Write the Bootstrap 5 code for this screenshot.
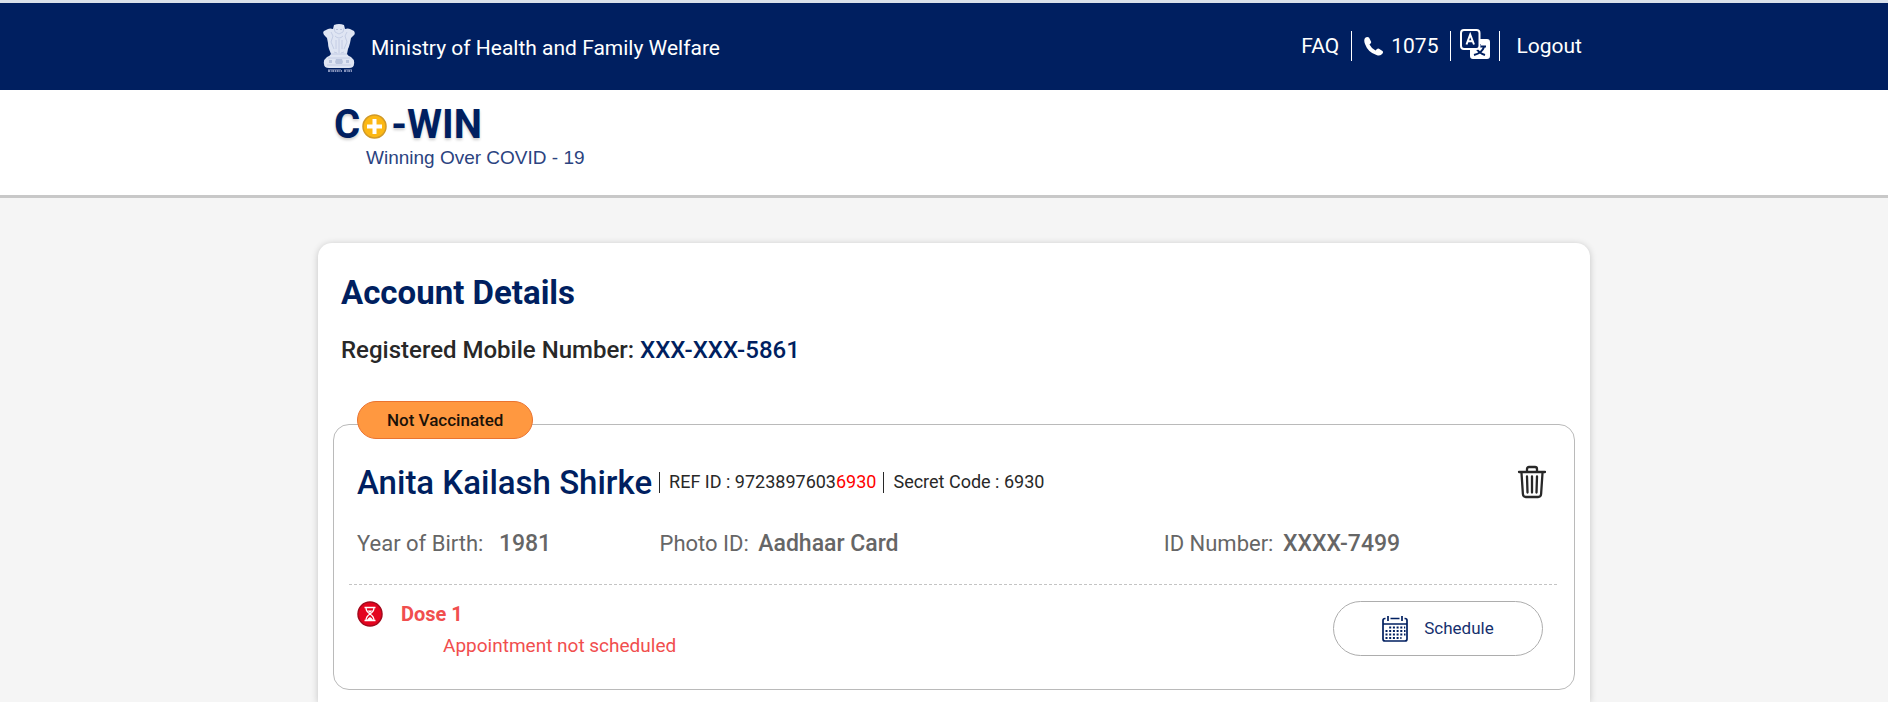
<!DOCTYPE html>
<html lang="en">
<head>
<meta charset="utf-8">
<meta name="viewport" content="width=device-width, initial-scale=1">
<title>Account Details - Co-WIN</title>
<link href="https://cdn.jsdelivr.net/npm/bootstrap@5.3.0/dist/css/bootstrap.min.css" rel="stylesheet">
<style>
  :root { --navy: #001f60; --line: #bababa; --coral: #f14e4e; }
  body { font-family: Roboto, "Liberation Sans", sans-serif; background: #f5f5f5; color: #282828; }
  .shell { padding-left: 20px; }
  .page-col { max-width: 1272px; margin: 0 auto; }
  .topbar { background: var(--navy); border-top: 3px solid #d9e0ea; color: #fff; font-size: 21px; }
  .topbar-row { min-height: 87px; padding: 4px 8px 0 5px; }
  .topbar a { color: #fff; text-decoration: none; line-height: 30px; }
  .util-links { margin-bottom: 5px; }
  .vline { width: 1px; background: currentColor; }
  .util-links .vline { height: 30px; margin: 0 12px; }
  .lang-btn { color: #fff; line-height: 0; }
  .lang-btn svg { margin-bottom: 3px; }
  .brandbar { background: #fff; border-bottom: 3px solid #c8c8c8; }
  .brandbar-row { min-height: 105px; padding: 16px 16px 0; }
  .wordmark { color: var(--navy); font-size: 40px; line-height: 38px; font-weight: 700; text-shadow: 0 2px 3px #0003; }
  .wordmark svg { margin: 2px 4px 0 2px; }
  .tagline { color: #2b4380; font: 19px/28px "Liberation Sans", Arial, sans-serif; padding-left: 32px; }
  .account { background: #fff; border-radius: 14px 14px 0 0; box-shadow: 0 1px 7px #0003; margin-top: 45px; padding: 30px 15px 12px; }
  .account h1 { color: var(--navy); font-size: 33px; line-height: 40px; font-weight: 700; margin: 0 8px 22px; }
  .mobile-line { font-size: 24px; line-height: 30px; font-weight: 500; margin: 0 8px 59px; }
  .navy { color: var(--navy); }
  .member { border: 1px solid var(--line); border-radius: 16px; padding: 36px 15px 28px; }
  .status-pill { position: absolute; top: -24px; left: 23px; background: #ff9840; border: 1px solid #ea7330; color: #1c1208; font-size: 17px; line-height: 36px; font-weight: 500; padding: 0 29px; border-radius: 19px; }
  .member-head { padding: 0 12px 0 8px; margin-bottom: 26px; font-size: 18px; line-height: 22px; }
  .member-head h2 { color: var(--navy); font-size: 33px; line-height: 40px; font-weight: 500; margin: 0; padding-top: 2px; }
  .member-head .vline { height: 21px; margin: 0 9px 0 7px; }
  .alert-digits { color: #f00; }
  .facts { --bs-gutter-x: 16px; margin: 0 0 25px; font-size: 22px; line-height: 30px; color: #666; }
  .facts b { font-size: 23px; line-height: 26px; font-weight: 500; margin-left: 4px; }
  .facts .wide { margin-left: 10px; }
  .dash { height: 1px; background: repeating-linear-gradient(90deg, #c4c4c4 0 3px, transparent 3px 5px); }
  .dose { padding: 16px 16px 0 8px; color: var(--coral); }
  .dose-text { margin-left: 18px; }
  .dose h3 { font-size: 20px; line-height: 26px; font-weight: 700; margin: 0 0 4px; }
  .dose p { font-size: 19px; line-height: 30px; margin: 0 0 0 42px; }
  .schedule { width: 210px; height: 55px; border: 1px solid #adadad; border-radius: 28px; color: #16306e; font-size: 17px; }
</style>
</head>
<body class="d-flex flex-column min-vh-100">
<header>
  <div class="topbar">
    <div class="shell">
      <div class="page-col topbar-row d-flex flex-wrap align-items-center justify-content-between">
        <div class="d-flex align-items-center">
          <svg width="32" height="50" viewBox="0 0 32 50" class="flex-shrink-0" aria-hidden="true">
            <path fill="#dfe5f3" d="M11 1q5-2 10 0l1 4q3-1 5 0l4 2q2 3-1 5l-2 2-1 5q-1 4-2 6l-1 5q1 2 4 3 4 3 3 7 0 4-5 4H6q-5 0-5-4-1-4 3-7 3-1 4-3l-2-5q-1-3-1-6l-1-5-2-2Q-1 9 1 7l4-2q2-1 5 0z"/>
            <path fill="none" stroke="#bcc7e0" stroke-width=".8" d="M11 4l1 4 4 2 4-2 1-4M8 8l2 4-2 6 3 7M24 8l-2 4 2 6-3 7M12 12q4 4 8 0M13 16v9M16 15v14M19 16v9M8 30h16M5 34h22M4 41h24M11 28l3 1M21 28l-3 1"/>
            <path fill="#b8c3dc" d="M13 35h6l1 3-1 2h-6l-1-2zM6 36h3v3H6zM23 36h3v3h-3zM13 5h2v1h-2zM17 5h2v1h-2z"/>
            <path stroke="#8492bb" stroke-width="2" stroke-dasharray="2 .7 1 .6" d="M5 47h14M21 47h8"/>
            <path stroke="#7987b2" stroke-width=".7" d="M5 45.600h13M21 45.600h8"/>
          </svg>
          <span class="ms-3">Ministry of Health and Family Welfare</span>
        </div>
        <nav class="util-links d-flex align-items-center" aria-label="Utility">
          <a href="#faq">FAQ</a>
          <span class="vline"></span>
          <a href="tel:1075" class="d-flex align-items-center">
            <svg width="19" height="19" viewBox="0 0 19 19" class="me-2" aria-hidden="true"><path fill="#fff" d="M1 1Q3-.5 5 .5l2 4q.5 1-.5 2L5.500 7.500q2 4 6 6l1.500-1.500q1-1 2-.3l3.500 2.300q1 1 0 2.500-2 3-6 1.500Q4 15.500 1 7-.5 3 1 1z"/></svg>1075</a>
          <span class="vline me-2"></span>
          <button type="button" class="btn lang-btn p-0 border-0" aria-label="Change language">
            <svg width="32" height="31" viewBox="0 0 32 31" aria-hidden="true">
              <path fill="#fff" d="M13 10h15q3 0 3 3v14q0 3-3 3H14q-3 0-3-3v-6h2z"/>
              <path fill="none" stroke="#001f60" stroke-width="2" d="M15 17.500h12M21 15v2.500M25 18q-2 6-10 8M17 19q3 5 9 7"/>
              <rect x="2" y="1" width="18.500" height="19" rx="3" fill="#001f60" stroke="#fff" stroke-width="2"/>
              <path fill="none" stroke="#fff" stroke-width="2" d="M7.500 15.500l3.700-10 3.800 10M8.800 12.300h4.900"/>
            </svg>
          </button>
          <span class="vline ms-2 me-3"></span>
          <a href="#logout">Logout</a>
        </nav>
      </div>
    </div>
  </div>
  <div class="brandbar">
    <div class="shell">
      <div class="page-col brandbar-row">
        <div class="wordmark d-flex align-items-center"><span>C</span><svg width="25" height="25" viewBox="0 0 25 25" role="img" aria-label="o"><circle cx="12.500" cy="12.500" r="11.500" fill="#fcb814" stroke="#d19a28" stroke-width="1.500"/><path stroke="#fff" stroke-width="4" d="M12.500 5v15M5 12.500h15"/></svg><span>-WIN</span></div>
        <div class="tagline">Winning Over COVID - 19</div>
      </div>
    </div>
  </div>
</header>
<main class="shell d-flex flex-column flex-grow-1">
  <section class="page-col account w-100 flex-grow-1">
    <h1>Account Details</h1>
    <p class="mobile-line">Registered Mobile Number: <span class="navy">XXX-XXX-5861</span></p>
    <article class="member position-relative">
      <span class="status-pill">Not Vaccinated</span>
      <div class="member-head d-flex flex-wrap align-items-center">
        <h2>Anita Kailash Shirke</h2>
        <span class="vline"></span>
        <span>REF ID : 9723897603<span class="alert-digits">6930</span></span>
        <span class="vline"></span>
        <span>Secret Code : 6930</span>
        <button type="button" class="btn p-0 border-0 ms-auto lh-1" aria-label="Delete member">
          <svg width="30" height="34" viewBox="0 0 30 34" fill="none" stroke="#282828" stroke-width="2.300" stroke-linecap="round" stroke-linejoin="round" aria-hidden="true"><path d="M2 7h26M10 6V4q0-2 2-2h6q2 0 2 2v2M4.500 8l1.400 21q.2 3 3 3h12.200q2.800 0 3-3l1.400-21M10 11.500l.5 16M15 11.500v16M20 11.500l-.5 16"/></svg>
        </button>
      </div>
      <div class="row facts">
        <div class="col-md-3">Year of Birth: <b class="wide">1981</b></div>
        <div class="col-md-5">Photo ID: <b>Aadhaar Card</b></div>
        <div class="col-md-4">ID Number: <b>XXXX-7499</b></div>
      </div>
      <div class="dash"></div>
      <div class="dose d-flex flex-wrap align-items-start">
        <svg width="26" height="26" viewBox="0 0 26 26" class="flex-shrink-0" aria-hidden="true"><circle cx="13" cy="13" r="12" fill="#e4041f" stroke="#a30a1d" stroke-width="1.500"/><path fill="none" stroke="#fff" stroke-width="1.300" d="M7.500 6.500h11M7.500 19.500h11M9 6.500q0 4 4 6.500-4 2.500-4 6.500M17 6.500q0 4-4 6.500 4 2.500 4 6.500"/><path fill="#fff" d="M10.500 9.500h5L13 12zM10 19q1-2 3-3 2 1 3 3z"/></svg>
        <div class="dose-text">
          <h3>Dose 1</h3>
          <p>Appointment not scheduled</p>
        </div>
        <button type="button" class="btn schedule ms-auto p-0 d-flex align-items-center justify-content-center gap-3">
          <svg width="26" height="26" viewBox="0 0 26 26" fill="none" stroke="#001f60" stroke-width="1.700" aria-hidden="true"><path d="M3.500 2.500H3q-2 0-2 2V23q0 2 2 2h20q2 0 2-2V4.500q0-2-2-2h-.5M8.500 2.500h9M6 0v5M20 0v5M1 8h24"/><path stroke-width="2" stroke-dasharray="2 1.700" d="M7.200 11.500h16M3.500 15h20M3.500 18.500h20M3.500 22h16"/></svg>
          Schedule
        </button>
      </div>
    </article>
  </section>
</main>
<script src="https://cdn.jsdelivr.net/npm/bootstrap@5.3.0/dist/js/bootstrap.bundle.min.js"></script>
</body>
</html>
